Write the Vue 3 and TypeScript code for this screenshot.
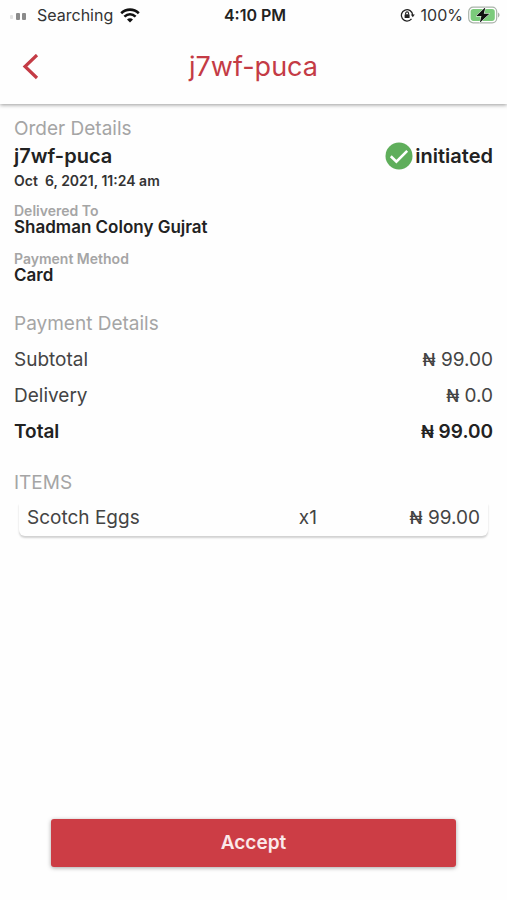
<script setup lang="ts">
interface AmountRow {
  label: string
  amount: string
  strong?: boolean
}

interface OrderItem {
  name: string
  quantity: number
  amount: string
}

const orderId = 'j7wf-puca'
const placedAt = 'Oct  6, 2021, 11:24 am'

const facts = [
  { label: 'Delivered To', value: 'Shadman Colony Gujrat' },
  { label: 'Payment Method', value: 'Card' },
]

const amounts: AmountRow[] = [
  { label: 'Subtotal', amount: '99.00' },
  { label: 'Delivery', amount: '0.0' },
  { label: 'Total', amount: '99.00', strong: true },
]

const items: OrderItem[] = [{ name: 'Scotch Eggs', quantity: 1, amount: '99.00' }]
</script>

<template>
  <div class="screen">
    <div class="status-bar">
      <div class="status-left">
        <svg class="signal" width="16" height="12" viewBox="0 0 16 12" aria-hidden="true">
          <rect x="0" y="6" width="3" height="4" rx="1" fill="#e2e2e2" />
          <rect x="6" y="4" width="4" height="7" rx="1" fill="#8b8b8b" />
          <rect x="12" y="4" width="4" height="7" rx="1" fill="#8b8b8b" />
        </svg>
        <span>Searching</span>
        <svg class="wifi" width="20" height="15" viewBox="0 0 20 15" aria-hidden="true">
          <path d="M1.2 5.2C6.2.4 13.8.4 18.8 5.2" />
          <path d="M4.4 8.6c3.3-3 7.9-3 11.2 0" />
          <path class="dot" d="M7 11.4c1.8-1.5 4.2-1.5 6 0l-3 3z" />
        </svg>
      </div>
      <span class="clock">4:10 PM</span>
      <div class="status-right">
        <svg width="16" height="14" viewBox="0 0 16 14" aria-hidden="true">
          <path d="M11.5 10.9A5.7 5.7 0 1 1 12.7 7" fill="none" stroke="#222" stroke-width="1.3" />
          <path d="M10.8 6.5h4l-2 2.7z" fill="#222" />
          <rect x="4.6" y="6.3" width="5" height="3.8" rx=".6" fill="#222" />
          <path d="M5.6 6.6V5.4a1.5 1.5 0 0 1 3 0v1.2" fill="none" stroke="#222" stroke-width="1.1" />
        </svg>
        <span class="percent">100%</span>
        <svg width="32" height="18" viewBox="0 0 32 18" aria-hidden="true">
          <rect x=".7" y="1.2" width="28" height="15.6" rx="4.5" fill="#fff" stroke="#a9b3a9" stroke-width="1.2" />
          <rect x="2.6" y="3.1" width="24.2" height="11.8" rx="2.8" fill="#7bcb7b" />
          <path d="M30 6.6c2 .8 2 4 0 4.8z" fill="#a9b3a9" />
          <path d="M17.4 1.3 8.2 10h5.2l-1.6 6.8 9.6-9h-5.6z" fill="#111" stroke="#fff" stroke-width="1" paint-order="stroke" />
        </svg>
      </div>
    </div>

    <header class="nav">
      <button class="back" type="button" aria-label="Back">
        <svg width="18" height="26" viewBox="0 0 18 26" aria-hidden="true">
          <path d="M16 1 4 12.5 16 24" fill="none" stroke="#c43b45" stroke-width="3.2" />
        </svg>
      </button>
      <h1>{{ orderId }}</h1>
    </header>

    <main>
      <section class="order">
        <h2>Order Details</h2>
        <div class="order-head">
          <strong>{{ orderId }}</strong>
          <span class="state">
            <svg width="28" height="28" viewBox="0 0 28 28" aria-hidden="true">
              <circle cx="14" cy="14" r="13.5" fill="#5fae5b" />
              <path d="m5.8 14.2 5.6 5.5L22.2 8.8" fill="none" stroke="#fff" stroke-width="2.6" />
            </svg>
            <strong>initiated</strong>
          </span>
        </div>
        <p class="date">{{ placedAt }}</p>
        <dl class="facts">
          <div v-for="fact in facts" :key="fact.label">
            <dt>{{ fact.label }}</dt>
            <dd>{{ fact.value }}</dd>
          </div>
        </dl>
      </section>

      <section class="payment">
        <h2>Payment Details</h2>
        <dl class="amounts">
          <div v-for="row in amounts" :key="row.label" :class="{ total: row.strong }">
            <dt>{{ row.label }}</dt>
            <dd><span class="naira">₦</span> {{ row.amount }}</dd>
          </div>
        </dl>
      </section>

      <section class="items">
        <h2>ITEMS</h2>
        <ul>
          <li v-for="item in items" :key="item.name">
            <span>{{ item.name }}</span>
            <span>x{{ item.quantity }}</span>
            <span class="price"><span class="naira">₦</span> {{ item.amount }}</span>
          </li>
        </ul>
      </section>
    </main>

    <footer>
      <button class="accept" type="button">Accept</button>
    </footer>
  </div>
</template>

<style>
body {
  margin: 0;
  background: #fefefe;
}
</style>

<style scoped>
.screen {
  display: flex;
  flex-direction: column;
  min-height: 100vh;
  font-family: Inter, "Liberation Sans", sans-serif;
  font-size: 19px;
  color: #444;
  background: #fefefe;
}

h1,
h2,
p,
dl,
dd,
ul {
  margin: 0;
  padding: 0;
}

button {
  border: 0;
  font-family: inherit;
  cursor: pointer;
}

svg {
  display: block;
  flex: none;
}

.status-bar {
  display: grid;
  grid-template-columns: 1fr auto 1fr;
  align-items: center;
  height: 30px;
  padding: 0 7px 0 10px;
  font-size: 16px;
  color: #333;
}

.status-left,
.status-right {
  display: flex;
  align-items: center;
}

.status-left {
  gap: 7px;
}

.signal {
  margin-right: 4px;
}

.status-right {
  justify-content: flex-end;
  gap: 5px;
}

.wifi path {
  fill: none;
  stroke: #111;
  stroke-width: 2.6;
}

.wifi .dot {
  fill: #111;
  stroke: none;
}

.clock {
  font-weight: 600;
  color: #222;
}

.nav {
  display: grid;
  grid-template-columns: 48px 1fr 48px;
  align-items: center;
  height: 74px;
  box-shadow: 0 1px 4px rgba(0, 0, 0, 0.4);
  clip-path: inset(0 0 -10px 0);
}

.back {
  display: flex;
  justify-content: center;
  padding: 8px 0 8px 12px;
  background: none;
}

h1 {
  font-size: 27px;
  font-weight: 400;
  line-height: 36px;
  text-align: center;
  color: #c43b45;
}

main {
  flex: 1;
  padding: 11px 14px 24px;
}

h2 {
  font-size: 19px;
  font-weight: 400;
  line-height: 27px;
  color: #a5a5a5;
}

.order-head {
  display: flex;
  align-items: center;
  justify-content: space-between;
  line-height: 28px;
  color: #222;
}

.order-head strong {
  font-size: 20px;
  font-weight: 600;
}

.state {
  display: flex;
  align-items: center;
  gap: 2px;
}

.date {
  font-size: 14px;
  font-weight: 600;
  line-height: 22px;
  white-space: pre;
  color: #333;
}

.facts {
  display: grid;
  gap: 16px;
  padding-top: 11px;
  line-height: 16px;
}

.facts dt {
  font-size: 14px;
  font-weight: 600;
  color: #a5a5a5;
}

.facts dd {
  font-size: 17px;
  font-weight: 600;
  color: #222;
}

.payment {
  padding-top: 27px;
}

.amounts {
  padding-top: 5px;
}

.amounts div {
  display: flex;
  justify-content: space-between;
  line-height: 36px;
}

.amounts .total {
  font-weight: 600;
  color: #222;
}

.naira {
  font-size: 17px;
  font-weight: 500;
}

.total .naira {
  font-weight: 600;
}

.items {
  padding-top: 19px;
}

ul {
  list-style: none;
  padding: 7px 5px 0;
}

li {
  display: grid;
  grid-template-columns: 3fr 1fr 1fr;
  padding: 0 8px 3px;
  line-height: 30px;
  border-radius: 0 0 6px 6px;
  background: #fefefe;
  box-shadow: 0 2px 2px rgba(0, 0, 0, 0.18);
}

.price {
  text-align: right;
  white-space: nowrap;
}

footer {
  padding: 0 10% 33px;
}

.accept {
  display: block;
  width: 100%;
  border-radius: 3px;
  font-size: 19px;
  font-weight: 600;
  line-height: 48px;
  padding: 0;
  color: #fbe9ea;
  background: #cc3d45;
  box-shadow: 0 1px 4px rgba(0, 0, 0, 0.35);
}
</style>
